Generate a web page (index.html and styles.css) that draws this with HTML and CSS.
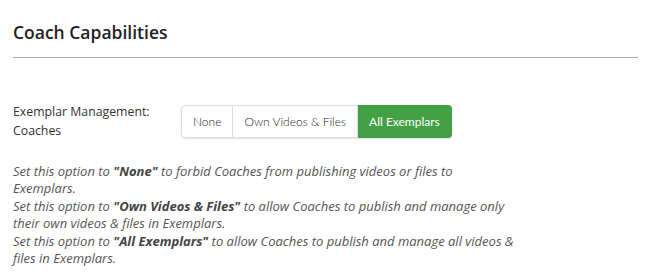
FILE: index.html
```html
<!DOCTYPE html>
<html lang="en">
<head>
    <meta charset="UTF-8">
    <title>Coach Capabilities</title>
    <link rel="stylesheet" href="styles.css">
</head>
<body>
    <section class="painel">
        <h2 class="painel-titulo">Coach Capabilities</h2>

        <div class="campo">
            <label class="campo-rotulo">Exemplar Management: Coaches</label>
            <div class="grupo-botoes">
                <button type="button" class="opcao">None</button>
                <button type="button" class="opcao">Own Videos &amp; Files</button>
                <button type="button" class="opcao ativa">All Exemplars</button>
            </div>
        </div>

        <p class="ajuda">
            Set this option to <strong>"None"</strong> to forbid Coaches from publishing videos or files to Exemplars.<br>
            Set this option to <strong>"Own Videos &amp; Files"</strong> to allow Coaches to publish and manage only their own videos &amp; files in Exemplars.<br>
            Set this option to <strong>"All Exemplars"</strong> to allow Coaches to publish and manage all videos &amp; files in Exemplars.
        </p>
    </section>
</body>
</html>
```

FILE: styles.css
```css
:root {
    --cor-texto: #333333;
    --cor-ajuda: #555555;
    --cor-borda: #dddddd;
    --cor-linha: #aaaaaa;
    --cor-verde: #43a046;
}
* { box-sizing: border-box; margin: 0; padding: 0; }
body {
    font-family: 'Open Sans', 'Liberation Sans', sans-serif;
    color: var(--cor-texto);
    background: #ffffff;
    font-size: 13px;
}
.painel { padding: 20px 17px 0 13px; }
.painel-titulo {
    font-size: 17.5px; font-weight: 600; color: #222;
    line-height: 24px; padding-bottom: 13px;
    border-bottom: 1px solid var(--cor-linha);
}
.campo { display: flex; align-items: center; margin-top: 44px; }
.campo-rotulo { width: 168px; font-size: 12.3px; line-height: 19px; padding-right: 20px; }
.grupo-botoes {
    display: flex; border-radius: 4px;
    box-shadow: 0 1px 2px rgba(0, 0, 0, 0.12);
}
.opcao {
    font-family: 'Lato', sans-serif; font-size: 12px; font-weight: 300;
    color: #222; background: #fff; border: 1px solid var(--cor-borda);
    height: 33px; padding: 0 11px; cursor: pointer;
}
.opcao + .opcao { border-left: none; }
.opcao:first-child { border-radius: 4px 0 0 4px; }
.opcao:last-child { border-radius: 0 4px 4px 0; }
.opcao.ativa { background: var(--cor-verde); border-color: var(--cor-verde); color: #fff; font-weight: 400; }
.ajuda {
    margin-top: 23px; width: 502px; font-style: italic; line-height: 17.4px;
    color: var(--cor-ajuda);
}
.ajuda strong { font-weight: 700; color: #444; }
```
